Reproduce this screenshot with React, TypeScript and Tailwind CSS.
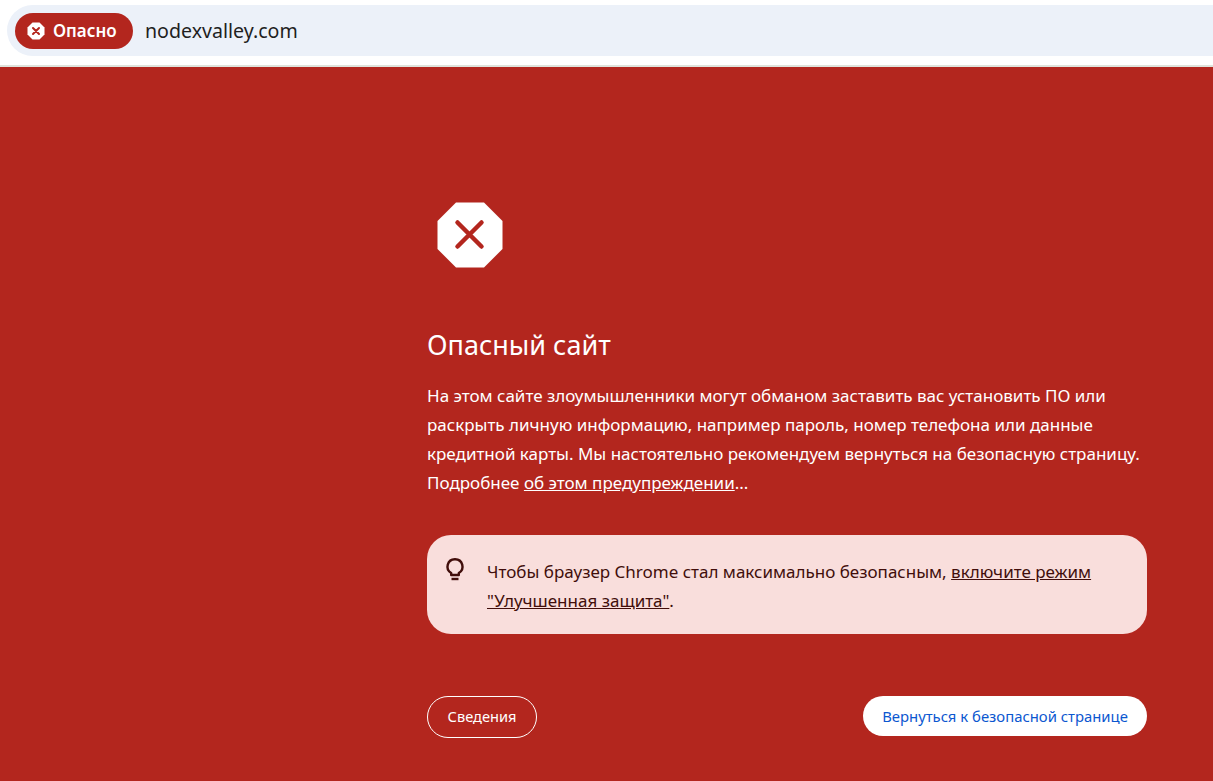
import React from "react";

export default function App() {
  return (
    <div className="w-[1213px] h-[781px] overflow-hidden flex flex-col bg-[#b3261e] font-['Noto_Sans','Open_Sans',sans-serif]">
      <header className="h-[67px] shrink-0 bg-white border-b-2 border-[#dfe3dc] pt-[5px] pl-[7px]">
        <div className="h-[51px] bg-[#ecf1f9] rounded-l-[26px] flex items-center pl-[8px]">
          <div className="w-[118px] h-[36px] rounded-full bg-[#b3261e] flex items-center pl-[12px] gap-[8px]">
            <svg width="18" height="18" viewBox="0 0 18 18">
              <polygon points="5.5,0.5 12.5,0.5 17.5,5.5 17.5,12.5 12.5,17.5 5.5,17.5 0.5,12.5 0.5,5.5" fill="#fff" />
              <path d="M6 6L12 12M12 6L6 12" stroke="#b3261e" strokeWidth="2" strokeLinecap="round" />
            </svg>
            <span className="text-white text-[17px] font-semibold leading-none">Опасно</span>
          </div>
          <span className="ml-[12px] text-[#1f1f1f] text-[19.6px] leading-none">nodexvalley.com</span>
        </div>
      </header>
      <main className="w-[720px] ml-[427px] pt-[135px] text-white">
        <svg className="ml-[10px] block" width="66" height="66" viewBox="0 0 66 66">
          <polygon points="19,0.5 47,0.5 65.5,19 65.5,47 47,65.5 19,65.5 0.5,47 0.5,19" fill="#fff" />
          <path d="M20.5 20.5L44.5 44.5M44.5 20.5L20.5 44.5" stroke="#b3261e" strokeWidth="4.5" strokeLinecap="round" />
        </svg>
        <h1 className="mt-[57px] text-[27px] leading-[40px] font-normal">Опасный сайт</h1>
        <p className="mt-[16px] text-[17px] leading-[29px]">
          На этом сайте злоумышленники могут обманом заставить вас установить ПО или раскрыть личную информацию, например пароль, номер телефона или данные кредитной карты. Мы настоятельно рекомендуем вернуться на безопасную страницу. Подробнее <a className="underline">об этом предупреждении</a>...
        </p>
        <div className="mt-[38px] h-[99px] rounded-[24px] bg-[#f9dedc] text-[#410e0b] flex items-start pt-[22px] pl-[17px] pr-[40px]">
          <svg className="shrink-0" width="22" height="24" viewBox="0 0 22 24" fill="none" stroke="#410e0b" strokeWidth="2.4">
            <path d="M11 2.2a7.4 7.4 0 0 0-3.8 13.8V18h7.6v-2A7.4 7.4 0 0 0 11 2.2Z" strokeLinejoin="round" />
            <path d="M7.5 22h7" />
          </svg>
          <p className="ml-[21px] text-[17px] leading-[29px]">
            Чтобы браузер Chrome стал максимально безопасным, <a className="underline">включите режим "Улучшенная защита"</a>.
          </p>
        </div>
        <div className="mt-[62px] flex justify-between items-start">
          <button className="w-[110px] h-[42px] rounded-full border border-white text-white text-[14.6px]">Сведения</button>
          <button className="w-[284px] h-[40px] rounded-full bg-white text-[#0b57d0] text-[14.85px]">Вернуться к безопасной странице</button>
        </div>
      </main>
    </div>
  );
}
